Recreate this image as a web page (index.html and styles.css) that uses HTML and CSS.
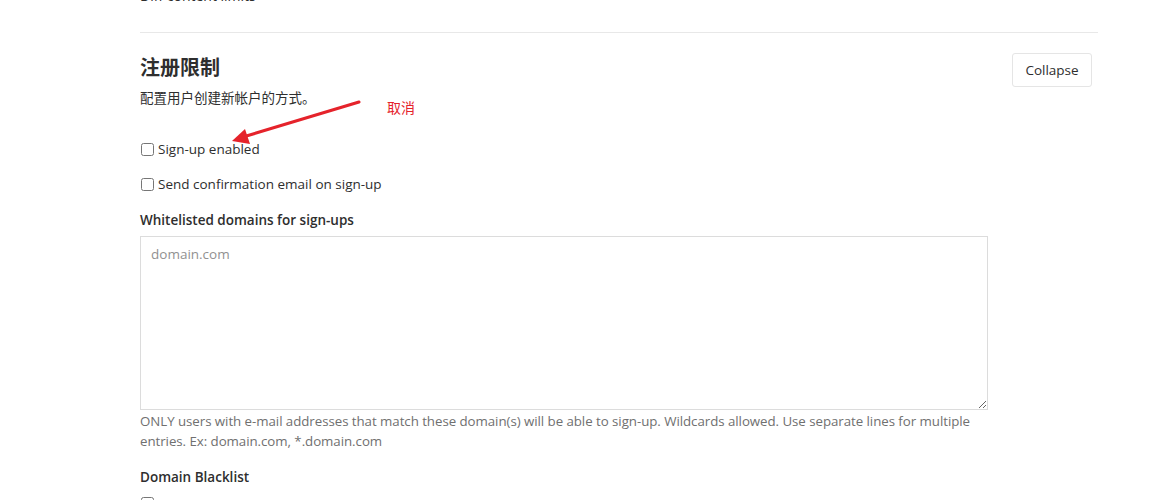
FILE: index.html
```html
<!DOCTYPE html>
<html lang="zh">
<head>
<meta charset="utf-8">
<title>注册限制</title>
<link rel="stylesheet" href="styles.css">
</head>
<body>
<div class="page">
  <div class="prev-section">
    <p class="prev-text">Diff content limits</p>
  </div>
  <section class="settings-section">
    <div class="section-head">
      <div class="head-text">
        <h4 class="section-title">注册限制</h4>
        <p class="section-desc">配置用户创建新帐户的方式。</p>
      </div>
      <button class="btn-collapse" type="button">Collapse</button>
    </div>
    <div class="section-body">
      <div class="check-row">
        <label class="check-label"><input type="checkbox" class="check"> Sign-up enabled</label>
      </div>
      <div class="check-row">
        <label class="check-label"><input type="checkbox" class="check"> Send confirmation email on sign-up</label>
      </div>
      <div class="field">
        <label class="field-label">Whitelisted domains for sign-ups</label>
        <textarea class="textarea" placeholder="domain.com"></textarea>
        <p class="help">ONLY users with e-mail addresses that match these domain(s) will be able to sign-up. Wildcards allowed. Use separate lines for multiple entries. Ex: domain.com, *.domain.com</p>
      </div>
      <div class="field">
        <label class="field-label">Domain Blacklist</label>
        <div class="check-row">
          <input type="checkbox" class="check" aria-label="Enable domain blacklist for sign ups">
        </div>
      </div>
    </div>
    <span class="annot-text">取消</span>
    <svg class="annot-arrow" width="140" height="50" viewBox="0 0 140 50">
      <line x1="128" y1="3" x2="12" y2="38" stroke="#e5232b" stroke-width="3" stroke-linecap="round"/>
      <polygon points="1,42 14,30 19,45" fill="#e5232b"/>
    </svg>
  </section>
</div>
</body>
</html>
```
FILE: styles.css
```css
html, body {
  margin: 0;
  padding: 0;
  background: #fff;
}
body {
  font-family: "Open Sans", "Noto Sans CJK SC", sans-serif;
  font-size: 14px;
  color: #2e2e2e;
  overflow: hidden;
}
.page {
  width: 958px;
  margin-left: 140px;
}
.prev-section {
  height: 32px;
  border-bottom: 1px solid #e8e8e8;
  overflow: hidden;
}
.prev-text {
  margin: -14px 0 0 0;
  line-height: 20px;
  font-size: 14px;
  color: #2e2e2e;
}
.settings-section {
  position: relative;
}
.section-head {
  display: flex;
  justify-content: space-between;
  align-items: flex-start;
  padding-top: 20px;
  padding-right: 6px;
}
.section-title {
  margin: 0;
  font-family: "Noto Sans CJK SC", sans-serif;
  font-size: 20px;
  font-weight: 700;
  line-height: 28px;
  color: #2e2e2e;
}
.section-desc {
  margin: 6px 0 0;
  font-family: "Noto Sans CJK SC", sans-serif;
  font-size: 13.5px;
  line-height: 20px;
  color: #2e2e2e;
}
.btn-collapse {
  height: 34px;
  width: 80px;
  background: #fff;
  border: 1px solid #e5e5e5;
  border-radius: 3px;
  font-family: "Open Sans", sans-serif;
  font-size: 13.5px;
  color: #2e2e2e;
  padding: 0;
}
.section-body {
  padding-top: 32px;
}
.check-row {
  height: 20px;
  margin-bottom: 15px;
  display: flex;
  align-items: center;
}
.check-label {
  display: flex;
  align-items: center;
  font-size: 13.5px;
  line-height: 20px;
  color: #2e2e2e;
}
.check {
  width: 13px;
  height: 13px;
  margin: 0 4px 0 1px;
}
.field {
  display: flex;
  flex-direction: column;
  width: 848px;
}
.field-label {
  display: block;
  font-size: 13.5px;
  font-weight: 600;
  line-height: 20px;
  color: #2e2e2e;
  margin: 1px 0 6px;
}
.textarea {
  display: block;
  box-sizing: border-box;
  width: 848px;
  height: 174px;
  margin: 0;
  border: 1px solid #dcdcdc;
  border-radius: 0;
  padding: 7px 10px;
  font-family: "Open Sans", sans-serif;
  font-size: 13.5px;
  line-height: 20px;
  color: #2e2e2e;
  resize: vertical;
}
.textarea::placeholder {
  color: #919191;
}
.help {
  margin: 1px 0 15px;
  font-size: 13.3px;
  letter-spacing: -0.05px;
  line-height: 20px;
  color: #707070;
}
.annot-text {
  position: absolute;
  left: 247px;
  top: 64px;
  font-family: "Noto Sans CJK SC", sans-serif;
  font-size: 14px;
  line-height: 20px;
  color: #e5232b;
}
.annot-arrow {
  position: absolute;
  left: 91px;
  top: 66px;
}
```
